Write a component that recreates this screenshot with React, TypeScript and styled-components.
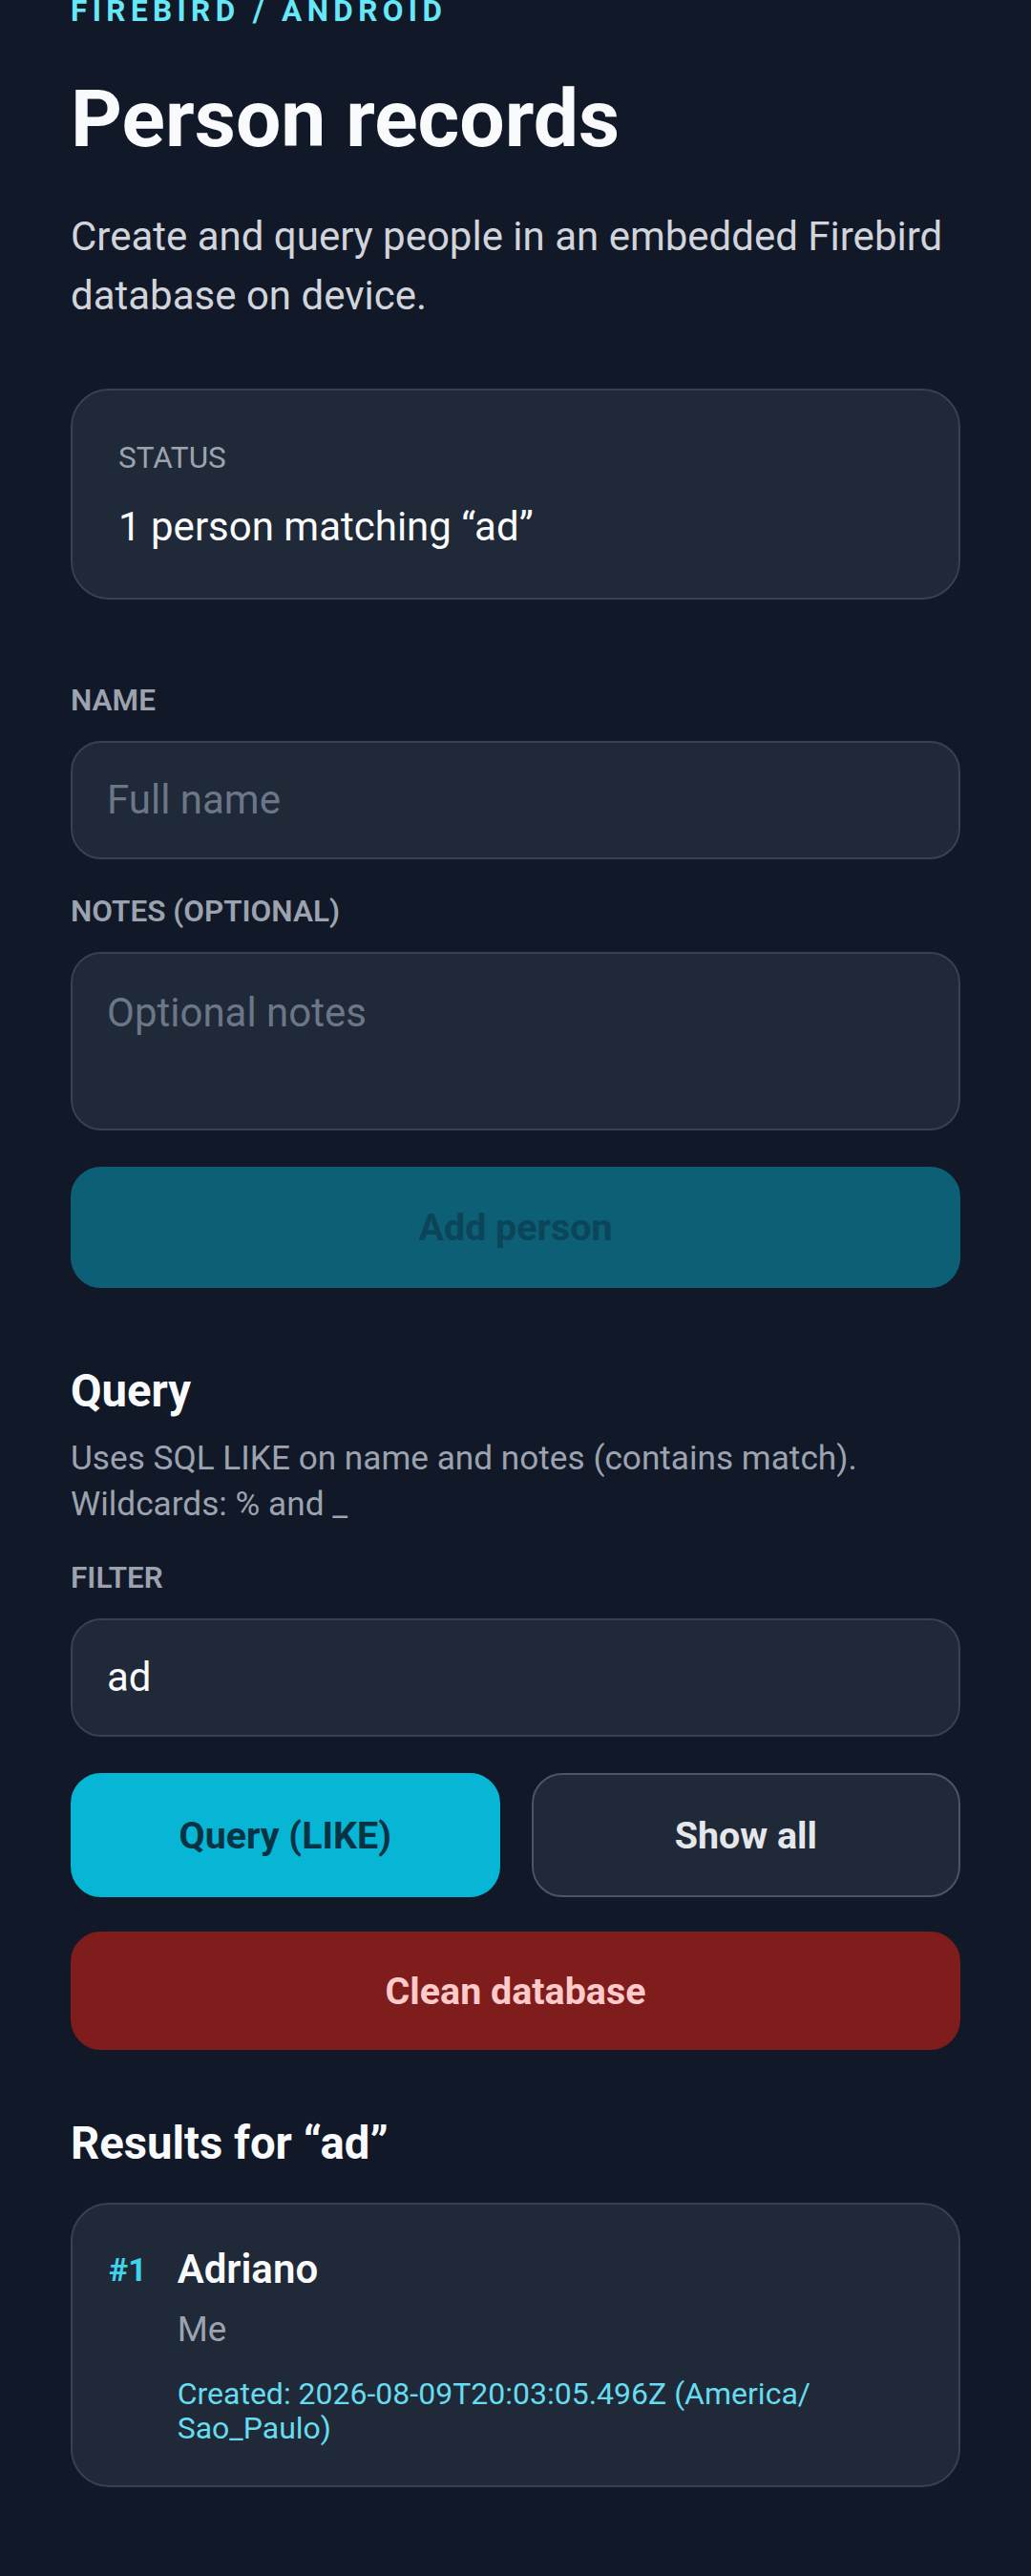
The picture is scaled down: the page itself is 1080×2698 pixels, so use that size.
import React from "react";
import styled, { createGlobalStyle } from "styled-components";

const GlobalStyle = createGlobalStyle`
  html, body {
    margin: 0;
    padding: 0;
    background: #111827;
  }
  body {
    font-family: Roboto, "Noto Sans", "Liberation Sans", sans-serif;
    -webkit-font-smoothing: antialiased;
  }
  * { box-sizing: border-box; }
`;

const Page = styled.main`
  display: flex;
  flex-direction: column;
  padding: 0 74px 92px;
  min-height: 2698px;
  background: #111827;
`;

const Eyebrow = styled.div`
  margin-top: -9px;
  font-size: 31.5px;
  line-height: 42px;
  font-weight: 700;
  letter-spacing: 5.4px;
  color: #67e8f9;
  text-transform: uppercase;
`;

const Title = styled.h1`
  margin: 42px 0 0;
  font-size: 84px;
  line-height: 100px;
  font-weight: 700;
  color: #f9fafb;
`;

const Lead = styled.p`
  margin: 42.3px 0 0;
  font-size: 42px;
  line-height: 62px;
  color: #d1d5db;
`;

const Card = styled.section<{ $mt: number }>`
  margin-top: ${(p) => p.$mt}px;
  background: #1f2937;
  border: 2px solid #374151;
  border-radius: 40px;
`;

const StatusCard = styled(Card)`
  padding: 50px 48px 46px;
  display: flex;
  flex-direction: column;
  gap: 23px;
`;

const StatusLabel = styled.div`
  font-size: 31.5px;
  line-height: 42px;
  color: #9ca3af;
  text-transform: uppercase;
`;

const StatusText = styled.div`
  font-size: 42px;
  line-height: 56px;
  color: #f9fafb;
`;

const Field = styled.label<{ $mt: number }>`
  display: flex;
  flex-direction: column;
  gap: 21px;
  margin-top: ${(p) => p.$mt}px;
`;

const FieldLabel = styled.span`
  font-size: 31.5px;
  line-height: 42px;
  font-weight: 600;
  color: #9ca3af;
  text-transform: uppercase;
`;

const inputBase = `
  width: 100%;
  background: #1f2937;
  border: 2px solid #374151;
  border-radius: 32px;
  font-family: Roboto, "Noto Sans", "Liberation Sans", sans-serif;
  font-size: 42px;
  line-height: 56px;
  color: #f9fafb;
  outline: none;
  &::placeholder { color: #6b7789; }
`;

const TextInput = styled.input`
  ${inputBase}
  height: 124px;
  padding: 0 36px;
`;

const TextArea = styled.textarea`
  ${inputBase}
  height: 187px;
  padding: 34px 36px;
  resize: none;
  display: block;
`;

const Button = styled.button<{ $variant: "primary" | "disabled" | "ghost" | "danger"; $h: number }>`
  height: ${(p) => p.$h}px;
  width: 100%;
  border-radius: 32px;
  font-family: Roboto, "Noto Sans", "Liberation Sans", sans-serif;
  font-size: 39.4px;
  font-weight: 700;
  cursor: pointer;
  border: 2px solid
    ${(p) =>
      p.$variant === "ghost"
        ? "#4b5563"
        : p.$variant === "primary"
        ? "#06b6d4"
        : p.$variant === "danger"
        ? "#7f1d1d"
        : "#0c5f75"};
  background: ${(p) =>
    p.$variant === "primary"
      ? "#06b6d4"
      : p.$variant === "ghost"
      ? "#1f2937"
      : p.$variant === "danger"
      ? "#7f1d1d"
      : "#0c5f75"};
  color: ${(p) =>
    p.$variant === "primary"
      ? "#083344"
      : p.$variant === "ghost"
      ? "#e5e7eb"
      : p.$variant === "danger"
      ? "#fecaca"
      : "#0b4559"};
`;

const Block = styled.div<{ $mt: number }>`
  margin-top: ${(p) => p.$mt}px;
`;

const ButtonRow = styled.div`
  display: grid;
  grid-template-columns: 1fr 1fr;
  gap: 33px;
  margin-top: 38.5px;
`;

const SectionTitle = styled.h2<{ $mt: number }>`
  margin: ${(p) => p.$mt}px 0 0;
  font-size: 47.25px;
  line-height: 56px;
  font-weight: 700;
  color: #f9fafb;
`;

const Hint = styled.p`
  margin: 18px 0 0;
  font-size: 35.2px;
  line-height: 48px;
  color: #9ca3af;
`;

const ResultCard = styled(Card)`
  padding: 41.5px 36px 42.5px 38px;
  display: flex;
  align-items: flex-start;
  gap: 32px;
`;

const Rank = styled.div`
  font-size: 34px;
  line-height: 52px;
  font-weight: 700;
  color: #3fd3ec;
  flex: none;
`;

const ResultBody = styled.div`
  display: flex;
  flex-direction: column;
  flex: 1;
  min-width: 0;
`;

const PersonName = styled.div`
  font-size: 42px;
  line-height: 52px;
  font-weight: 600;
  color: #f9fafb;
`;

const PersonNotes = styled.div`
  margin-top: 13px;
  font-size: 36.75px;
  line-height: 48px;
  color: #9ca3af;
`;

const Created = styled.div`
  margin-top: 25px;
  font-size: 32px;
  line-height: 36px;
  color: #67dcf0;
`;

export default function App() {
  return (
    <>
      <GlobalStyle />
      <Page>
        <Eyebrow>Firebird / Android</Eyebrow>
        <Title>Person records</Title>
        <Lead>Create and query people in an embedded Firebird database on device.</Lead>

        <StatusCard $mt={65.4}>
          <StatusLabel>Status</StatusLabel>
          <StatusText>1 person matching “ad”</StatusText>
        </StatusCard>

        <Field $mt={85}>
          <FieldLabel>Name</FieldLabel>
          <TextInput placeholder="Full name" />
        </Field>

        <Field $mt={34}>
          <FieldLabel>Notes (optional)</FieldLabel>
          <TextArea placeholder="Optional notes" />
        </Field>

        <Block $mt={38}>
          <Button $variant="disabled" $h={127}>Add person</Button>
        </Block>

        <SectionTitle $mt={80.3}>Query</SectionTitle>
        <Hint>
          Uses SQL LIKE on name and notes (contains match).
          <br />
          Wildcards: % and _
        </Hint>

        <Field $mt={33}>
          <FieldLabel>Filter</FieldLabel>
          <TextInput defaultValue="ad" />
        </Field>

        <ButtonRow>
          <Button $variant="primary" $h={130}>Query (LIKE)</Button>
          <Button $variant="ghost" $h={130}>Show all</Button>
        </ButtonRow>

        <Block $mt={36}>
          <Button $variant="danger" $h={124}>Clean database</Button>
        </Block>

        <SectionTitle $mt={70}>Results for “ad”</SectionTitle>

        <ResultCard $mt={34}>
          <Rank>#1</Rank>
          <ResultBody>
            <PersonName>Adriano</PersonName>
            <PersonNotes>Me</PersonNotes>
            <Created>
              Created: 2026-08-09T20:03:05.496Z (America/
              <wbr />
              Sao_Paulo)
            </Created>
          </ResultBody>
        </ResultCard>
      </Page>
    </>
  );
}
